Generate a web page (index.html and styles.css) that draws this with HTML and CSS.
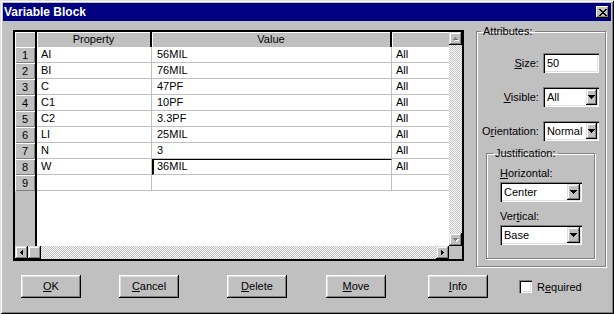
FILE: index.html
```html
<!DOCTYPE html>
<html lang="en">
<head>
  <meta charset="UTF-8" />
  <title>Variable Block</title>
  <link rel="stylesheet" href="styles.css">
</head>
<body>
  <div class="window">
    <div class="titlebar">
      <span class="title">Variable Block</span>
      <span class="close-btn">
        <svg width="8" height="7" viewBox="0 0 8 7">
          <path d="M0 0h2v1h1v1h2V1h1V0h2v1H7v1H6v1H5v1h1v1h1v1h1v1H6V6H5V5H3v1H2v1H0V6h1V5h1V4h1V3H2V2H1V1H0z" fill="#000"/>
        </svg>
      </span>
    </div>

    <div class="main">
      <!-- property sheet -->
      <div class="sheet">
        <div class="cells">
          <div class="row head">
            <div class="num"></div>
            <div class="cell">Property</div>
            <div class="cell">Value</div>
            <div class="cell"></div>
          </div>
          <div class="row"><div class="num">1</div><div class="cell">AI</div><div class="cell val">56MIL</div><div class="cell">All</div></div>
          <div class="row"><div class="num">2</div><div class="cell">BI</div><div class="cell val">76MIL</div><div class="cell">All</div></div>
          <div class="row"><div class="num">3</div><div class="cell">C</div><div class="cell val">47PF</div><div class="cell">All</div></div>
          <div class="row"><div class="num">4</div><div class="cell">C1</div><div class="cell val">10PF</div><div class="cell">All</div></div>
          <div class="row"><div class="num">5</div><div class="cell">C2</div><div class="cell val">3.3PF</div><div class="cell">All</div></div>
          <div class="row"><div class="num">6</div><div class="cell">LI</div><div class="cell val">25MIL</div><div class="cell">All</div></div>
          <div class="row"><div class="num">7</div><div class="cell">N</div><div class="cell val">3</div><div class="cell">All</div></div>
          <div class="row"><div class="num">8</div><div class="cell">W</div><div class="cell val editing">36MIL</div><div class="cell">All</div></div>
          <div class="row"><div class="num">9</div><div class="cell"></div><div class="cell val"></div><div class="cell"></div></div>
          <div class="filler"></div>
        </div>

        <div class="vscroll">
          <span class="sbtn">
            <svg width="6" height="4" viewBox="0 0 6 4"><path d="M3 1h1v1h1v1h1v1H2V3h1z" fill="#fff"/><path d="M2 0h1v1h1v1h1v1H0V2h1V1h1z" fill="#808080"/></svg>
          </span>
          <span class="track"></span>
          <span class="sbtn">
            <svg width="6" height="4" viewBox="0 0 6 4"><path d="M1 1h5v1H5v1H4v1H3V3H2V2H1z" fill="#fff"/><path d="M0 0h5v1H4v1H3v1H2V2H1V1H0z" fill="#808080"/></svg>
          </span>
        </div>

        <div class="hscroll">
          <span class="sbtn">
            <svg width="3" height="5" viewBox="0 0 3 5"><path d="M2 0h1v5H2V4H1V3H0V2h1V1h1z" fill="#000"/></svg>
          </span>
          <span class="sbtn thumb"></span>
          <span class="track"></span>
          <span class="sbtn">
            <svg width="3" height="5" viewBox="0 0 3 5"><path d="M0 0h1v1h1v1h1v1H2v1H1v1H0z" fill="#000"/></svg>
          </span>
        </div>

        <div class="corner"></div>
      </div>

      <!-- attributes panel -->
      <fieldset class="group attributes">
        <legend>Attributes:</legend>
        <div class="fields">
          <label><u>S</u>ize:</label>
          <div class="textbox">50</div>

          <label><u>V</u>isible:</label>
          <div class="combo small"><span>All</span><span class="drop"><svg width="7" height="4" viewBox="0 0 7 4"><path d="M0 0h7v1H6v1H5v1H4v1H3V3H2V2H1V1H0z" fill="#000"/></svg></span></div>

          <label>O<u>r</u>ientation:</label>
          <div class="combo small"><span>Normal</span><span class="drop"><svg width="7" height="4" viewBox="0 0 7 4"><path d="M0 0h7v1H6v1H5v1H4v1H3V3H2V2H1V1H0z" fill="#000"/></svg></span></div>
        </div>

        <fieldset class="group justification">
          <legend>Justification:</legend>
          <label><u>H</u>orizontal:</label>
          <div class="combo"><span>Center</span><span class="drop"><svg width="7" height="4" viewBox="0 0 7 4"><path d="M0 0h7v1H6v1H5v1H4v1H3V3H2V2H1V1H0z" fill="#000"/></svg></span></div>
          <label class="second">Ver<u>t</u>ical:</label>
          <div class="combo"><span>Base</span><span class="drop"><svg width="7" height="4" viewBox="0 0 7 4"><path d="M0 0h7v1H6v1H5v1H4v1H3V3H2V2H1V1H0z" fill="#000"/></svg></span></div>
        </fieldset>
      </fieldset>
    </div>

    <div class="actions">
      <span class="btn"><u>O</u>K</span>
      <span class="btn"><u>C</u>ancel</span>
      <span class="btn"><u>D</u>elete</span>
      <span class="btn"><u>M</u>ove</span>
      <span class="btn"><u>I</u>nfo</span>
      <label class="checkline"><span class="check"></span><span>R<u>e</u>quired</span></label>
    </div>
  </div>
</body>
</html>
```

FILE: styles.css
```css
/* Reset */
* {
  margin: 0;
  padding: 0;
  box-sizing: border-box;
  font-family: 'Liberation Sans', Arial, sans-serif;
}
body {
  width: 614px;
  height: 314px;
  background: #c0c0c0;
  color: #000;
  font-size: 11px;
  overflow: hidden;
}
u {
  text-decoration-thickness: 1px;
  text-underline-offset: 1px;
}
/* Window frame */
.window {
  width: 614px;
  height: 314px;
  padding: 3px;
  background: #c0c0c0;
  box-shadow: inset 1px 1px #dfdfdf, inset -1px -1px #000, inset 2px 2px #fff, inset -2px -2px #808080;
}
.titlebar {
  height: 18px;
  background: #000080;
  color: #fff;
  display: flex;
  align-items: center;
  justify-content: space-between;
  padding: 0 2px 0 1px;
}
.title {
  font-size: 12px;
  font-weight: bold;
}
.close-btn {
  width: 13px;
  height: 12px;
  background: #c0c0c0;
  display: flex;
  align-items: center;
  justify-content: center;
  box-shadow: inset -1px -1px #000, inset 1px 1px #fff, inset -2px -2px #808080;
}
/* Raised look shared by small buttons */
.sbtn, .drop, .num {
  background: #c0c0c0;
}
.sbtn, .drop {
  display: flex;
  align-items: center;
  justify-content: center;
  box-shadow: inset -1px -1px #000, inset 1px 1px #dfdfdf, inset -2px -2px #808080, inset 2px 2px #fff;
}
.track {
  flex: 1;
  background: repeating-conic-gradient(#fff 0 25%, #c0c0c0 0 50%) 0 0 / 2px 2px;
}
/* Main area */
.main {
  display: flex;
  align-items: flex-start;
  gap: 12px;
  padding: 4px 0 0 10px;
}
.sheet {
  width: 451px;
  height: 231px;
  margin-top: 5px;
  border: 2px solid #000;
  background: #fff;
  display: grid;
  grid-template-columns: 1fr 13px;
  grid-template-rows: 1fr 13px;
}
.cells {
  display: flex;
  flex-direction: column;
  overflow: hidden;
}
.row {
  display: grid;
  grid-template-columns: 22px 115px 240px 1fr;
  height: 16px;
  flex-shrink: 0;
}
.row.head {
  height: 15px;
}
.cell {
  border-right: 1px solid #c0c0c0;
  border-bottom: 1px solid #c0c0c0;
  padding-left: 4px;
  line-height: 15px;
  white-space: nowrap;
  overflow: hidden;
}
.cell:last-child {
  border-right: none;
}
.cell.val {
  padding-left: 5px;
}
.cell.editing {
  border: 1px solid #c0c0c0;
  border-left: 2px solid #000;
  border-top-color: #000;
  padding-left: 3px;
  line-height: 13px;
}
.num {
  border-right: 2px solid #000;
  text-align: center;
  line-height: 16px;
  box-shadow: inset 1px 1px #fff, inset -1px -1px #808080;
}
.head .cell {
  background: #c0c0c0;
  border-right: 2px solid #000;
  border-bottom: none;
  text-align: center;
  padding-left: 0;
  box-shadow: inset 1px 1px #fff;
}
.head .cell:last-child {
  border-right: none;
}
.head .num {
  box-shadow: inset 1px 1px #fff;
}
.filler {
  flex: 1;
  background: linear-gradient(90deg, #c0c0c0 20px, #000 20px 22px, #fff 22px);
}
.vscroll {
  display: flex;
  flex-direction: column;
}
.vscroll .sbtn {
  height: 13px;
}
.hscroll {
  display: flex;
}
.hscroll .sbtn {
  width: 13px;
}
.corner {
  background: #c0c0c0;
}
/* Group boxes */
.group {
  border: 1px solid #808080;
  box-shadow: inset 1px 1px #fff, 1px 1px #fff;
  min-inline-size: 0;
}
.group legend {
  padding: 0 2px;
  line-height: 13px;
}
.attributes {
  width: 130px;
  padding: 15px 8px 7px 9px;
}
.attributes > legend {
  margin-left: -5px;
}
.fields {
  display: grid;
  grid-template-columns: 1fr 56px;
  column-gap: 4px;
  row-gap: 14px;
  align-items: center;
  margin-left: -4px;
}
.fields label {
  text-align: right;
  white-space: nowrap;
}
.textbox, .combo {
  height: 20px;
  background: #fff;
  padding: 2px;
  box-shadow: inset 1px 1px #808080, inset 2px 2px #000, inset -1px -1px #fff, inset -2px -2px #dfdfdf;
}
.textbox {
  line-height: 16px;
  padding-left: 4px;
}
.combo {
  display: flex;
}
.combo span:first-child {
  flex: 1;
  line-height: 16px;
  padding-left: 2px;
  white-space: nowrap;
  overflow: hidden;
}
.drop {
  width: 13px;
}
.combo.small .drop {
  width: 11px;
}
.justification {
  margin: 6px 2px 0 0;
  padding: 7px 12px 13px 13px;
}
.justification > legend {
  margin-left: -7px;
}
.justification label {
  display: block;
  line-height: 13px;
  margin-bottom: 2px;
}
.justification label.second {
  margin-top: 8px;
}
/* Bottom buttons */
.actions {
  display: grid;
  grid-template-columns: 98px 108px 99px 102px 91px 1fr;
  align-items: center;
  margin-top: 8px;
  padding-left: 18px;
}
.btn {
  width: 60px;
  height: 23px;
  line-height: 23px;
  text-align: center;
  box-shadow: inset -1px -1px #000, inset 1px 1px #fff, inset -2px -2px #808080, inset 2px 2px #dfdfdf;
}
.checkline {
  display: flex;
  align-items: center;
  gap: 5px;
}
.check {
  width: 13px;
  height: 13px;
  background: #fff;
  box-shadow: inset 1px 1px #808080, inset 2px 2px #000, inset -1px -1px #fff, inset -2px -2px #dfdfdf;
}
```
